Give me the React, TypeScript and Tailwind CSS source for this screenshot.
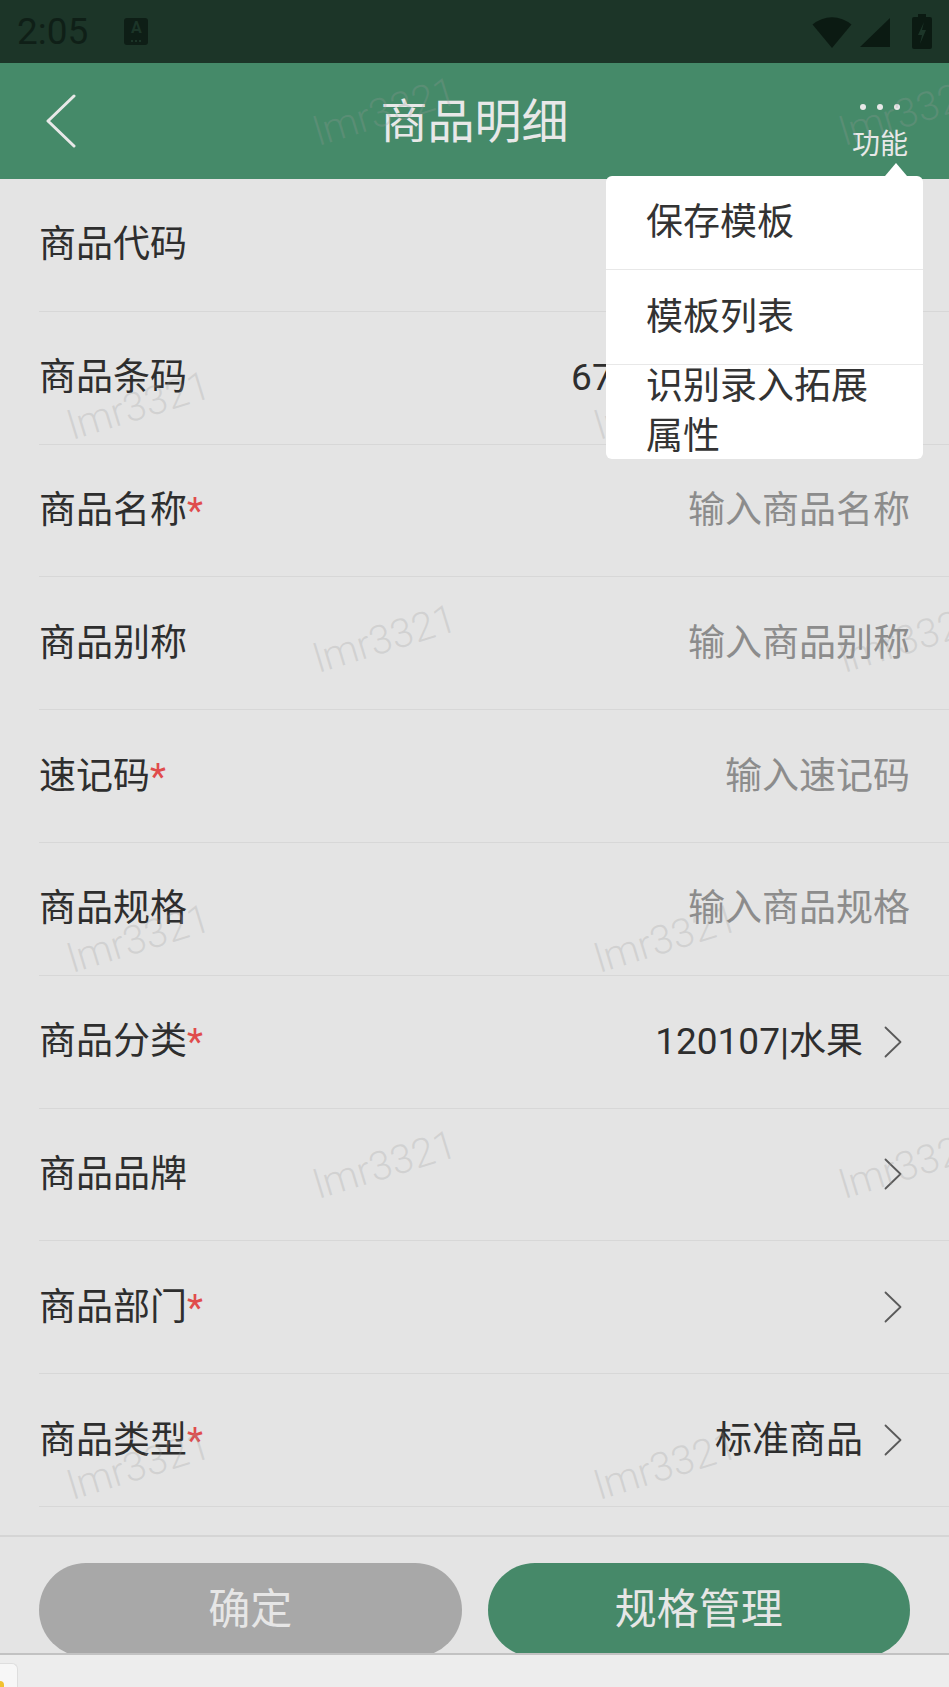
import React from "react";

type Row = {
  label: string;
  req?: boolean;
  value?: string;
  placeholder?: string;
  chevron?: boolean;
  wide?: boolean;
};

const rows: Row[] = [
  { label: "商品代码", value: "120000004234" },
  { label: "商品条码", value: "6759201800231452", wide: true },
  { label: "商品名称", req: true, placeholder: "输入商品名称" },
  { label: "商品别称", placeholder: "输入商品别称" },
  { label: "速记码", req: true, placeholder: "输入速记码" },
  { label: "商品规格", placeholder: "输入商品规格" },
  { label: "商品分类", req: true, value: "120107|水果", chevron: true },
  { label: "商品品牌", chevron: true },
  { label: "商品部门", req: true, chevron: true },
  { label: "商品类型", req: true, value: "标准商品", chevron: true },
  { label: "商品单位", req: true, chevron: true },
];

function Chevron() {
  return (
    <svg width="18" height="32" viewBox="0 0 18 32" className="ml-[21px] mr-[8px] shrink-0">
      <polyline points="1.5,1.5 16.5,16 1.5,30.5" fill="none" stroke="#5a5a5a" strokeWidth="1.8" strokeLinecap="round" strokeLinejoin="round" />
    </svg>
  );
}

const wm =
  "absolute -translate-x-1/2 -translate-y-1/2 rotate-[-17deg] whitespace-nowrap text-[40px] font-light leading-none text-[#9a9a9a40]";

export default function App() {
  return (
    <div className="relative h-[1687px] w-[949px] overflow-hidden bg-[#e4e4e4] [font-family:Roboto,'Noto_Sans_CJK_SC',sans-serif]">
      {/* status bar */}
      <div className="flex h-[63px] items-center bg-[#1c3528] pl-[17px] pr-[17px]">
        <span className="text-[37px] leading-none text-[#0f1f17]">2:05</span>
        <div className="relative ml-[36px] flex h-[27px] w-[24px] items-start justify-center rounded-[3px] bg-[#0e1e16]">
          <span className="mt-[2px] text-[16px] font-bold leading-none text-[#1c3528]">A</span>
          <div className="absolute bottom-[3px] left-1/2 flex -translate-x-1/2 gap-[2px]">
            <div className="h-[2px] w-[2px] bg-[#1c3528]" />
            <div className="h-[2px] w-[2px] bg-[#1c3528]" />
            <div className="h-[2px] w-[2px] bg-[#1c3528]" />
          </div>
        </div>
        <div className="ml-auto flex items-center">
          <svg width="42" height="34" viewBox="0 0 42 34">
            <path d="M21 33 L1.5 9.5 A 30 30 0 0 1 40.5 9.5 Z" fill="#0b1a12" />
          </svg>
          <svg width="31" height="30" viewBox="0 0 31 30" className="ml-[7px] mt-[3px]">
            <polygon points="30,0 30,29 0,29" fill="#0b1a12" />
          </svg>
          <svg width="20" height="35" viewBox="0 0 20 35" className="ml-[21px]">
            <rect x="6" y="0" width="8" height="4" fill="#0b1a12" />
            <rect x="0" y="3" width="20" height="32" rx="2" fill="#0b1a12" />
            <polygon points="12,8 6,21 10,21 8,30 14,16 10,16 12,8" fill="#1c3528" />
          </svg>
        </div>
      </div>

      {/* header */}
      <div className="grid h-[116px] grid-cols-[1fr_auto_1fr] items-center bg-[#458a69]">
        <div className="pl-[45px]">
          <svg width="32" height="54" viewBox="0 0 32 54">
            <polyline points="29,2 3,27 29,52" fill="none" stroke="#e8e8e8" strokeWidth="3" strokeLinecap="round" strokeLinejoin="round" />
          </svg>
        </div>
        <div className="text-[47px] leading-none text-[#e8e8e8]">商品明细</div>
        <div className="flex justify-end pr-[40px]">
          <div className="mt-[21px] flex w-[58px] flex-col items-center">
            <div className="flex gap-[11px]">
              <div className="h-[6px] w-[6px] rounded-full bg-[#e8e8e8]" />
              <div className="h-[6px] w-[6px] rounded-full bg-[#e8e8e8]" />
              <div className="h-[6px] w-[6px] rounded-full bg-[#e8e8e8]" />
            </div>
            <div className="mt-[21px] text-[28px] leading-none text-[#e8e8e8]">功能</div>
          </div>
        </div>
      </div>

      {/* list */}
      <div className="h-[1356px] overflow-hidden">
        {rows.map((r) => (
          <div key={r.label} className="ml-[39px] flex h-[132.8px] items-center border-b border-[#d7d7d7] pr-[39px]">
            <div className="text-[37px] leading-none text-[#2e2e2e]">
              {r.label}
              {r.req && <span className="text-[#e04c4c]">*</span>}
            </div>
            <div className="ml-auto flex items-center">
              {r.value && (
                <span className={r.wide ? "text-[37px] leading-none tracking-[0.4px] text-[#2e2e2e]" : "text-[37px] leading-none text-[#2e2e2e]"}>
                  {r.value}
                </span>
              )}
              {r.placeholder && <span className="text-[37px] leading-none text-[#8c8c8c]">{r.placeholder}</span>}
              {r.chevron && <Chevron />}
            </div>
          </div>
        ))}
      </div>

      {/* bottom buttons */}
      <div className="flex h-[118px] gap-[26px] overflow-hidden border-t-2 border-[#d5d5d5] px-[39px] pt-[26px]">
        <div className="flex h-[94px] flex-1 shrink-0 items-center justify-center rounded-full bg-[#a8a8a8] text-[42px] leading-none text-[#e6e6e6]">
          确定
        </div>
        <div className="flex h-[94px] flex-1 shrink-0 items-center justify-center rounded-full bg-[#468969] text-[42px] leading-none text-[#e6e6e6]">
          规格管理
        </div>
      </div>

      {/* system strip */}
      <div className="flex h-[34px] items-end border-t-2 border-[#c2c2c2] bg-[#ededed]">
        <div className="relative h-[24px] w-[18px] overflow-hidden rounded-tr-[6px] border-r border-t border-[#dedede] bg-[#f7f7f7]">
          <div className="absolute -bottom-[4px] -left-[4px] h-[10px] w-[8px] rounded-full bg-[#f2c230]" />
        </div>
      </div>

      {/* watermarks */}
      <div className="pointer-events-none absolute inset-0 z-10 [font-family:Roboto,sans-serif]">
        <span className={`${wm} left-[385px] top-[112px]`}>lmr3321</span>
        <span className={`${wm} left-[911px] top-[112px]`}>lmr3321</span>
        <span className={`${wm} left-[139px] top-[406px]`}>lmr3321</span>
        <span className={`${wm} left-[666px] top-[406px]`}>lmr3321</span>
        <span className={`${wm} left-[385px] top-[639px]`}>lmr3321</span>
        <span className={`${wm} left-[911px] top-[639px]`}>lmr3321</span>
        <span className={`${wm} left-[139px] top-[939px]`}>lmr3321</span>
        <span className={`${wm} left-[666px] top-[939px]`}>lmr3321</span>
        <span className={`${wm} left-[385px] top-[1165px]`}>lmr3321</span>
        <span className={`${wm} left-[911px] top-[1165px]`}>lmr3321</span>
        <span className={`${wm} left-[139px] top-[1466px]`}>lmr3321</span>
        <span className={`${wm} left-[666px] top-[1466px]`}>lmr3321</span>
      </div>

      {/* popup menu */}
      <svg width="22" height="13" viewBox="0 0 22 13" className="absolute left-[885px] top-[163px] z-20">
        <polygon points="11,0 22,13 0,13" fill="#ffffff" />
      </svg>
      <div className="absolute left-[606px] top-[176px] z-20 h-[283px] w-[317px] overflow-hidden rounded-[6px] bg-white">
        <div className="flex h-[94px] items-center border-b border-[#e8e8e8] pl-[40px] pr-[40px] text-[37px] leading-none text-[#333333]">
          保存模板
        </div>
        <div className="flex h-[95px] items-center border-b border-[#e8e8e8] pl-[40px] pr-[40px] text-[37px] leading-none text-[#333333]">
          模板列表
        </div>
        <div className="flex h-[94px] items-center pl-[40px] pr-[40px] text-[37px] leading-[50px] text-[#333333]">
          <div>识别录入拓展属性</div>
        </div>
      </div>
    </div>
  );
}
